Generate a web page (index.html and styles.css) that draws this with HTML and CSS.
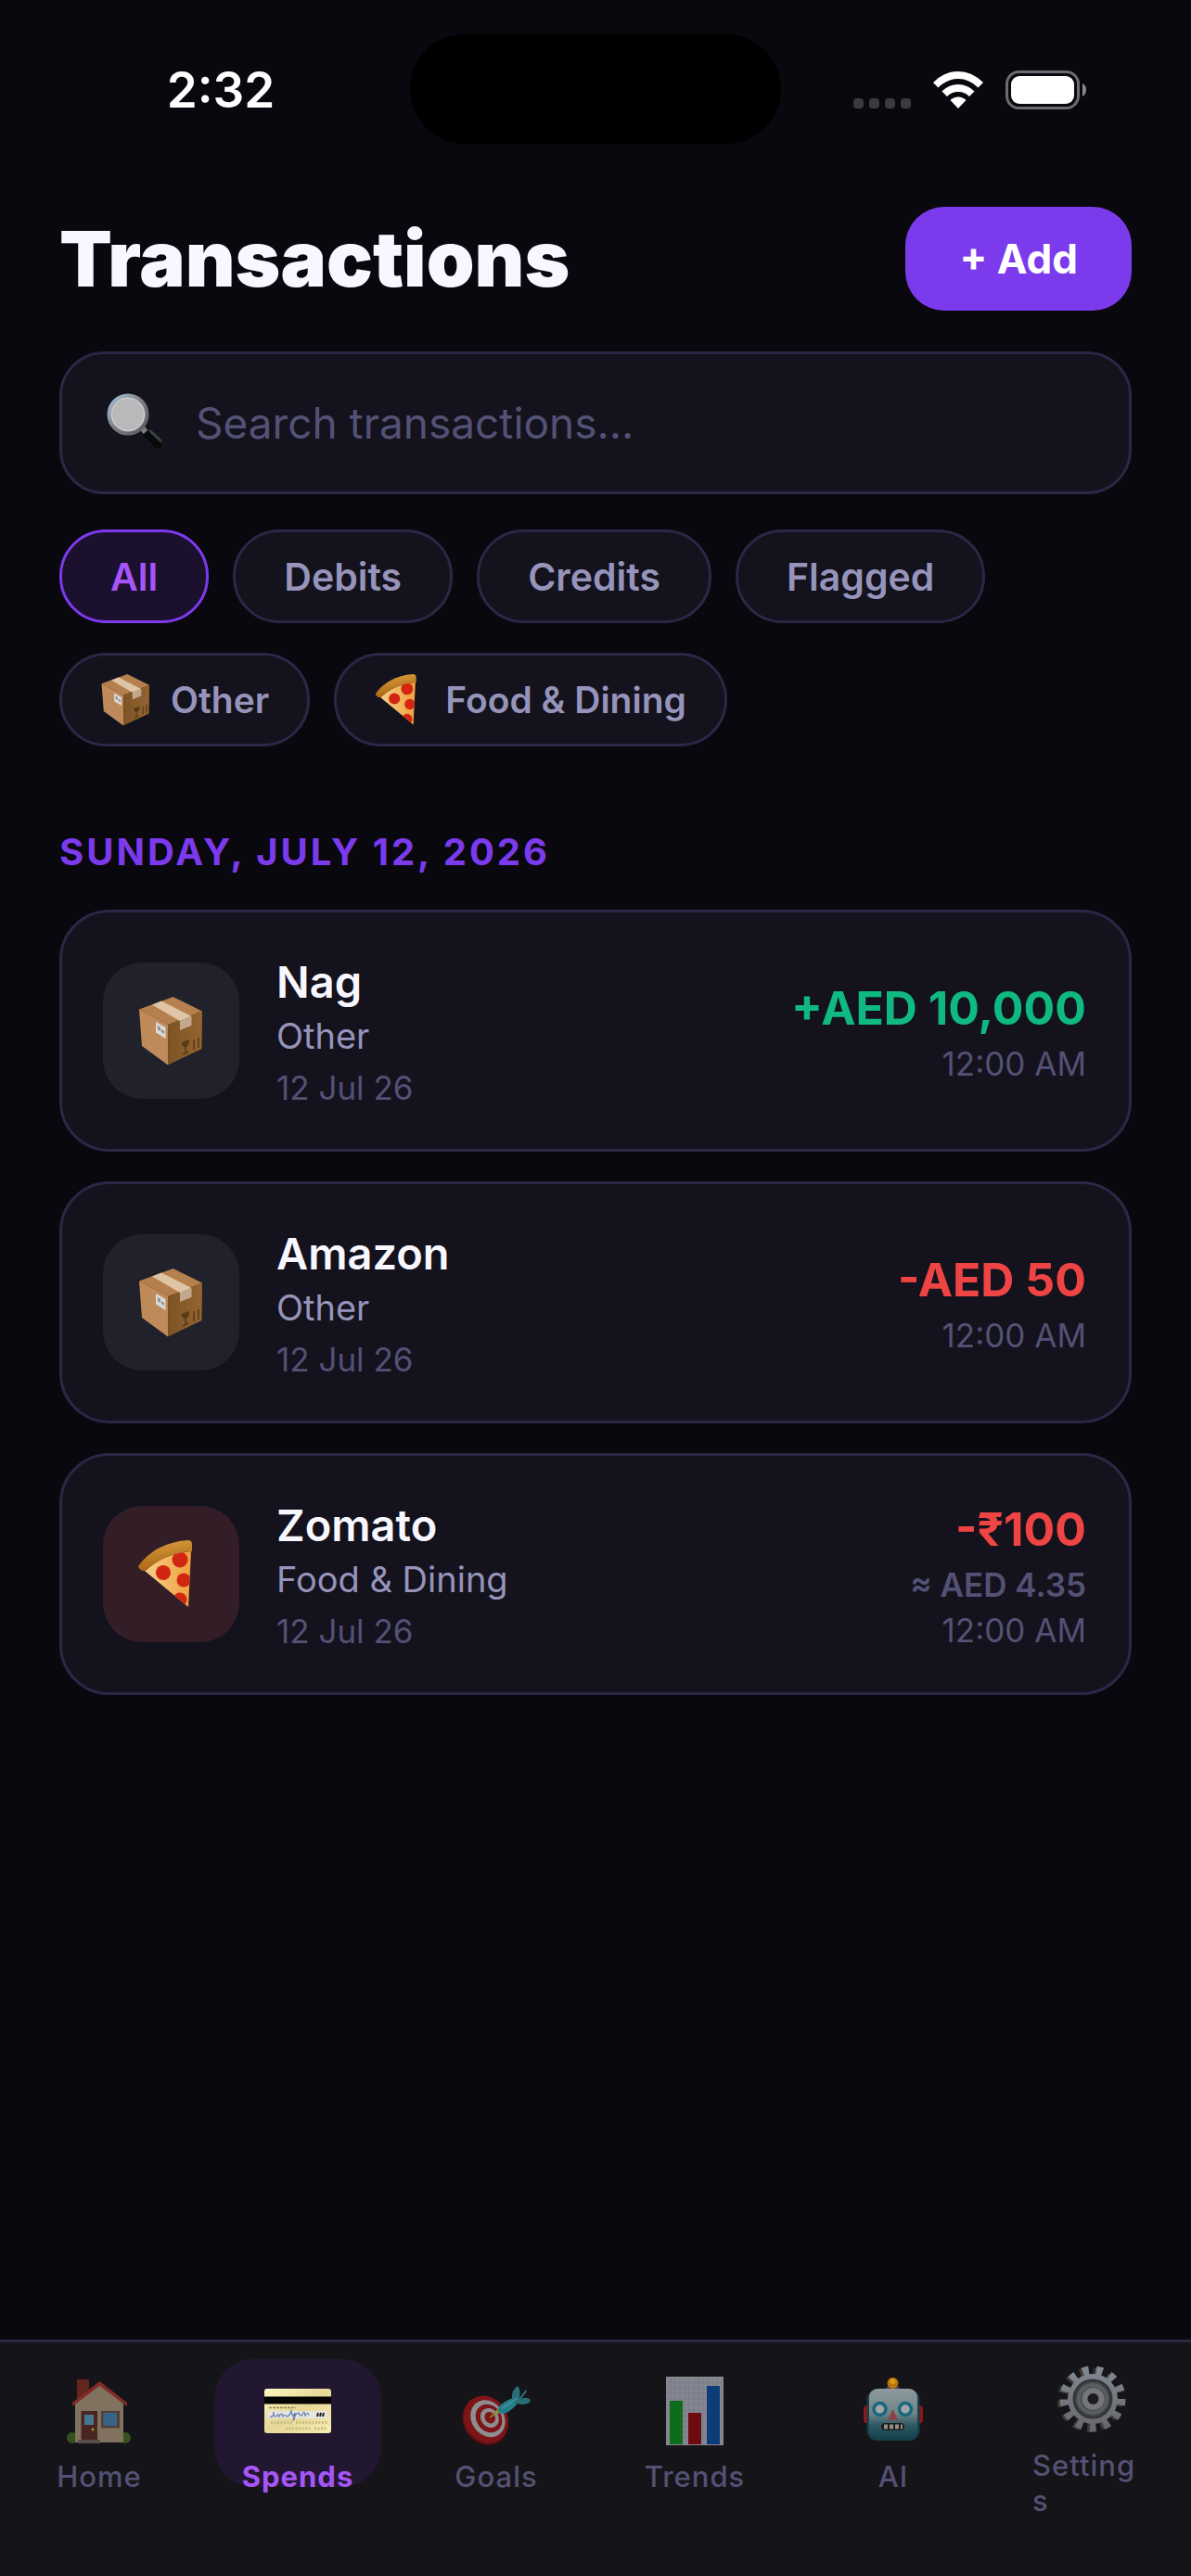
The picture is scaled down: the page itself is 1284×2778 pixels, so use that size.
FILE: index.html
```html
<!DOCTYPE html>
<html lang="en">
<head>
<meta charset="utf-8">
<meta name="viewport" content="width=device-width, initial-scale=1">
<title>Transactions</title>
<link rel="stylesheet" href="styles.css">
</head>
<body>
<svg class="sprite" aria-hidden="true">
  <defs>
    <linearGradient id="boxLeft" x1="0" y1="0" x2="0" y2="1"><stop offset="0" stop-color="#c08a58"/><stop offset="1" stop-color="#bd8a5c"/></linearGradient>
    <linearGradient id="boxRight" x1="0" y1="0" x2="1" y2="0"><stop offset="0" stop-color="#7d5425"/><stop offset="1" stop-color="#946430"/></linearGradient>
    <linearGradient id="crust" x1="0" y1="0" x2=".3" y2="1"><stop offset="0" stop-color="#e0a545"/><stop offset="1" stop-color="#a8620f"/></linearGradient>
    <linearGradient id="cheese" x1="0" y1="0" x2="1" y2="0"><stop offset="0" stop-color="#f5cf8c"/><stop offset="1" stop-color="#f0a03c"/></linearGradient>
    <linearGradient id="rim" x1="0" y1="0" x2="1" y2="1"><stop offset="0" stop-color="#a9c3da"/><stop offset=".5" stop-color="#7a7d82"/><stop offset="1" stop-color="#55585c"/></linearGradient>
    <linearGradient id="cardFace" x1="0" y1="0" x2="1" y2="1"><stop offset="0" stop-color="#fdf7c3"/><stop offset=".5" stop-color="#e5d795"/><stop offset="1" stop-color="#f8eeb4"/></linearGradient>
    <linearGradient id="robotFace" x1="0" y1="0" x2="0" y2="1"><stop offset="0" stop-color="#8d9a9c"/><stop offset=".5" stop-color="#6f8588"/><stop offset=".75" stop-color="#2b5863"/><stop offset="1" stop-color="#184450"/></linearGradient>
    <linearGradient id="gearFace" gradientUnits="userSpaceOnUse" x1="36" y1="0" x2="36" y2="72"><stop offset="0" stop-color="#818991"/><stop offset="1" stop-color="#66666c"/></linearGradient>
    <clipPath id="slice"><path d="M7 33Q28 14 57 12L54 72Z"/></clipPath>
  </defs>
  <symbol id="i-box" viewBox="-2 0 74 74">
    <path d="M36.600 0L68 15.500L31.500 30L0 13.500Z" fill="#b5804d"/>
    <path d="M0 13.500L31.500 30L31 73.500L3 53Z" fill="url(#boxLeft)"/>
    <path d="M31.500 30L68 15.500L67.500 56L31 73.500Z" fill="url(#boxRight)"/>
    <path d="M14 8.500L24 4.500L56.500 21L44 26Z" fill="#dfc5a5"/>
    <path d="M44 26L56.500 21V31L44 36Z" fill="#c3a98a"/>
    <path d="M18 27L28.500 33V45L18 38.500Z" fill="#d9d9d6"/>
    <path d="M20 31l3 2v4l-3-2zM24 35l3 2v3l-3-2z" fill="#8d8f8e"/>
    <path d="M46 49l8-3q0 7-4 8q-4 0-4-5z" fill="#56381a"/>
    <path d="M50 54v7M47 62l6-3M59 46v11M64 44v11" fill="none" stroke="#56381a" stroke-width="1.500"/>
  </symbol>
  <symbol id="i-pizza" viewBox="-1 0 74 74">
    <path d="M7 33Q28 14 57 12L54 72Z" fill="url(#cheese)"/>
    <g clip-path="url(#slice)" fill="#d22512"><circle cx="45" cy="21" r="8.500"/><circle cx="27" cy="35" r="8"/><circle cx="49" cy="43" r="7.500"/><circle cx="45" cy="64" r="7.500"/></g>
    <path d="M0 28Q18 3 53 0Q58 0 58 4V12Q30 13 8 33Q2 34 0 28Z" fill="url(#crust)"/>
  </symbol>
  <symbol id="i-search" viewBox="0 0 66 64">
    <path d="M43 43L57 56" stroke="#15181b" stroke-width="14" stroke-linecap="round"/>
    <path d="M42 43L55 56" stroke="#08090b" stroke-width="8" stroke-linecap="round"/>
    <path d="M47 41L58 51" stroke="#3b4145" stroke-width="3" stroke-linecap="round"/>
    <path d="M37 36L42 42" stroke="#7c7c7c" stroke-width="6"/>
    <circle cx="23" cy="23" r="20.500" fill="#b9b8ba" stroke="url(#rim)" stroke-width="4"/>
    <circle cx="23" cy="23" r="17.500" fill="none" stroke="#d6d6d6" stroke-width="1"/>
  </symbol>
  <symbol id="i-home" viewBox="-2 -3 74 74">
    <ellipse cx="6" cy="63" rx="6" ry="6" fill="#35511f"/><ellipse cx="63" cy="63" rx="6" ry="6" fill="#35511f"/>
    <path d="M11 0H24V16L11 22Z" fill="#64251f"/>
    <path d="M9 26L35.500 5L61 26V68H9Z" fill="#80725f"/>
    <path d="M6 25L35.500 2L65 25V29L35.500 7L6 29Z" fill="#812b27"/>
    <path d="M15.500 34H33V65H15.500Z" fill="#4a251f"/><path d="M19 38h10v11H19Z" fill="#477594"/>
    <circle cx="28" cy="54" r="1.500" fill="#a78e37"/>
    <path d="M37 34H57V52.500H37Z" fill="#543e34"/><path d="M39.500 36H54V50H39.500Z" fill="#38648a"/>
    <path d="M12 65H36V69H12Z" fill="#55504e"/>
  </symbol>
  <symbol id="i-card" viewBox="-1 -13 74 74">
    <rect width="72" height="48" rx="3" fill="url(#cardFace)"/>
    <path d="M0 8.500H72V16.500H0Z" fill="#050403"/>
    <path d="M5 20.500H34" stroke="#928958" stroke-width="1.500" stroke-dasharray="3 1"/>
    <rect x="4" y="24" width="64" height="8" fill="#e6e5e2"/>
    <path d="M6 30q4 2 4-5q-1 5 3 5q2-5 3 0q3-6 4 0q2-3 4 0q3 0 5-6q1 5 2 6l2-4q0 8-2 8q3-8 6-8q2 5 4 2q2-6 3 1q3-5 4 0" fill="none" stroke="#5878a8" stroke-width="1.200"/>
    <path d="M58 26l-1 4M61 26l-1 4M64 26l-1 4" stroke="#222" stroke-width="2"/>
    <path d="M7 36.500H30M34 36.500H68M23 43H50M54 43H68" stroke="#c9bd85" stroke-width="3" stroke-dasharray="2 1.500"/>
  </symbol>
  <symbol id="i-target" viewBox="0 -10 74 74">
    <g transform="rotate(-35 26 36)">
      <ellipse cx="24" cy="37" rx="23" ry="27" fill="#5d0f13"/>
      <ellipse cx="26" cy="36" rx="23" ry="26.500" fill="#7d1418"/>
      <ellipse cx="28" cy="36.500" rx="17.500" ry="21" fill="#8e8e90"/>
      <ellipse cx="29" cy="37" rx="13.500" ry="16" fill="#7d1418"/>
      <ellipse cx="30" cy="37" rx="9.500" ry="11" fill="#8e8e90"/>
      <ellipse cx="30.500" cy="37" rx="5.500" ry="6.500" fill="#7d1418"/>
    </g>
    <path d="M30 34L40 26" stroke="#8d751c" stroke-width="2"/>
    <path d="M34 30L41 22L44 30Z" fill="#a58a22"/>
    <path d="M39 28Q37 20 55 13Q58 14 59 20Q50 31 40 30Z" fill="#237e88"/>
    <path d="M54 15Q53 4 60 0Q64 5 62 13L69 4L70 6L64 14Q70 11 74 15Q73 22 58 19Z" fill="#2a6e77"/>
    <path d="M44 24L60 13" stroke="#3d929b" stroke-width="2"/>
  </symbol>
  <symbol id="i-chart" viewBox="-6 0 74 74">
    <path d="M0 0H62V74H0Z" fill="#85878f"/>
    <path d="M5 1V73M10 1V73M15 1V73M20 1V73M25 1V73M30 1V73M35 1V73M40 1V73M45 1V73M50 1V73M55 1V73M1 6H61M1 12H61M1 18H61M1 24H61M1 30H61M1 36H61M1 42H61M1 48H61M1 54H61M1 60H61M1 66H61" stroke="#787d8b" stroke-width="1"/>
    <path d="M4 26H18V73H4Z" fill="#0e6d1c"/><path d="M24 39H38V73H24Z" fill="#6c0c10"/><path d="M44 10H58V73H44Z" fill="#0d3d78"/>
  </symbol>
  <symbol id="i-robot" viewBox="-5 -1 74 74">
    <path d="M0 34Q0 30 4 30V49H2Q0 49 0 45ZM64 34Q64 30 60 30V49H62Q64 49 64 45Z" fill="#8e1719"/>
    <rect x="24" y="9" width="15" height="9" rx="4" fill="#4c3a5f"/>
    <circle cx="31.500" cy="6" r="6" fill="#b8740c"/><circle cx="31.500" cy="4" r="3" fill="#dc9c1a"/>
    <rect x="3.500" y="13" width="57" height="55" rx="11" fill="#17404a"/>
    <rect x="6" y="12" width="52" height="53" rx="9" fill="url(#robotFace)"/>
    <g fill="#a2a5a7" stroke="#17687c" stroke-width="3.500"><circle cx="17.500" cy="34" r="6.500"/><circle cx="45" cy="34" r="6.500"/></g>
    <path d="M31.500 34L37 46H26Z" fill="#8c4144"/>
    <rect x="19" y="49" width="25" height="8" rx="4" fill="#1e1d1d"/>
    <path d="M22 53H42" stroke="#918f85" stroke-width="5" stroke-dasharray="4 2"/>
  </symbol>
  <symbol id="i-gear" viewBox="-1 0 74 74">
    <circle cx="34" cy="37" r="30" fill="none" stroke="#3f3a38" stroke-width="10" stroke-dasharray="6.500 8"/>
    <circle cx="37" cy="36" r="30.500" fill="none" stroke="url(#gearFace)" stroke-width="10" stroke-dasharray="6.700 8.040"/>
    <circle cx="37" cy="36" r="27" fill="url(#gearFace)"/>
    <circle cx="37" cy="36" r="20" fill="#46494c" stroke="#34373a" stroke-width="3"/>
    <circle cx="37" cy="36" r="15" fill="none" stroke="#5b5d60" stroke-width="4"/>
    <circle cx="37.500" cy="36" r="9" fill="#1c1c1f" stroke="#74767a" stroke-width="6"/>
  </symbol>
</svg>

<div class="app">
  <header class="status">
    <time class="clock">2:32</time>
    <div class="island"></div>
    <div class="indicators">
      <svg class="cell" viewBox="0 0 62 12" fill="#3b3a3f" aria-hidden="true"><rect width="11" height="11" rx="4"/><rect x="17" width="11" height="11" rx="4"/><rect x="34" width="11" height="11" rx="4"/><rect x="51" width="11" height="11" rx="4"/></svg>
      <svg class="wifi" viewBox="0 0 54 40" fill="#fff" aria-hidden="true"><path d="M0 12Q12 0 27 0T54 12L48.500 17.500Q39 8 27 8T5.500 17.500Z"/><path d="M9.500 21.500Q17 14 27 14T44.500 21.500L39 27Q34 22 27 22T15 27Z"/><path d="M18.500 31Q22 27.500 27 27.500T35.500 31L27 40Z"/></svg>
      <svg class="battery" viewBox="0 0 88 42" aria-hidden="true"><rect x="1.500" y="1.500" width="77" height="39" rx="13" fill="none" stroke="#6c6b70" stroke-width="3"/><rect x="6" y="6" width="68" height="30" rx="9" fill="#fff"/><path d="M83 14Q87 16 87 21T83 28Z" fill="#8a898d"/></svg>
    </div>
  </header>

  <main class="page">
    <div class="heading">
      <h1>Transactions</h1>
      <button class="add" type="button">+ Add</button>
    </div>

    <label class="search">
      <svg class="search-icon" role="img" aria-label="Search"><use href="#i-search"/></svg>
      <input type="text" placeholder="Search transactions...">
    </label>

    <div class="filters">
      <button class="chip active" type="button">All</button>
      <button class="chip" type="button">Debits</button>
      <button class="chip" type="button">Credits</button>
      <button class="chip" type="button">Flagged</button>
    </div>
    <div class="filters">
      <button class="chip category" type="button"><svg class="chip-icon" aria-hidden="true"><use href="#i-box"/></svg>Other</button>
      <button class="chip category" type="button"><svg class="chip-icon" aria-hidden="true"><use href="#i-pizza"/></svg>Food &amp; Dining</button>
    </div>

    <section>
      <h2>SUNDAY, JULY 12, 2026</h2>
      <ul class="list">
        <li class="card">
          <div class="tile"><svg aria-hidden="true"><use href="#i-box"/></svg></div>
          <div class="info"><h3>Nag</h3><p class="kind">Other</p><p class="note">12 Jul 26</p></div>
          <div class="sum"><p class="amount credit">+AED 10,000</p><p class="note">12:00 AM</p></div>
        </li>
        <li class="card">
          <div class="tile"><svg aria-hidden="true"><use href="#i-box"/></svg></div>
          <div class="info"><h3>Amazon</h3><p class="kind">Other</p><p class="note">12 Jul 26</p></div>
          <div class="sum"><p class="amount debit">-AED 50</p><p class="note">12:00 AM</p></div>
        </li>
        <li class="card">
          <div class="tile food"><svg aria-hidden="true"><use href="#i-pizza"/></svg></div>
          <div class="info"><h3>Zomato</h3><p class="kind">Food &amp; Dining</p><p class="note">12 Jul 26</p></div>
          <div class="sum"><p class="amount debit">-₹100</p><p class="note converted">≈ AED 4.35</p><p class="note">12:00 AM</p></div>
        </li>
      </ul>
    </section>
  </main>

  <nav class="tabs">
    <a class="tab" href="#home"><svg aria-hidden="true"><use href="#i-home"/></svg><span>Home</span></a>
    <a class="tab current" href="#spends" aria-current="page"><svg aria-hidden="true"><use href="#i-card"/></svg><span>Spends</span></a>
    <a class="tab" href="#goals"><svg aria-hidden="true"><use href="#i-target"/></svg><span>Goals</span></a>
    <a class="tab" href="#trends"><svg aria-hidden="true"><use href="#i-chart"/></svg><span>Trends</span></a>
    <a class="tab" href="#ai"><svg aria-hidden="true"><use href="#i-robot"/></svg><span>AI</span></a>
    <a class="tab raised" href="#settings"><svg aria-hidden="true"><use href="#i-gear"/></svg><span>Settings</span></a>
  </nav>
</div>
</body>
</html>
```
FILE: styles.css
```css
:root {
  --bg: #09080e;
  --surface: #13121d;
  --line: #2a2845;
  --text: #f8f7ff;
  --soft: #9694ba;
  --muted: #535174;
  --violet: #7c3aed;
  --lilac: #a855f7;
}

* { box-sizing: border-box; }

body {
  margin: 0;
  background: var(--bg);
  color: var(--text);
  font-family: Inter, "Noto Sans", sans-serif;
}

h1, h2, h3, p, ul { margin: 0; padding: 0; }
button, input { font: inherit; }

/* Kept rendered at zero size so its gradients stay usable */
.sprite { position: absolute; width: 0; height: 0; }

.app {
  display: flex;
  flex-direction: column;
  min-height: 100vh;
}

/* Status bar */
.status {
  display: grid;
  grid-template-columns: 1fr 400px 1fr;
  align-items: center;
  padding-top: 37px;
}
.clock {
  justify-self: center;
  padding: 2px 0 0 34px;
  color: #fff;
  font-size: 53px;
  font-weight: 600;
  line-height: 64px;
}
.island {
  height: 118px;
  border-radius: 59px;
  background: #000;
}
.indicators {
  display: flex;
  align-items: center;
  justify-content: flex-end;
  gap: 24px;
  padding: 2px 112px 0 0;
}
.cell { width: 62px; height: 12px; margin-top: 30px; }
.wifi { width: 54px; height: 40px; }
.battery { width: 88px; height: 42px; }

/* Page */
.page {
  flex: 1;
  padding: 68px 64px 0;
}
.heading {
  display: flex;
  align-items: center;
  justify-content: space-between;
}
h1 {
  font-size: 83px;
  font-weight: 900;
  line-height: 100px;
}
.add {
  height: 112px;
  padding: 0 58px;
  border: 0;
  border-radius: 42px;
  background: var(--violet);
  color: #fff;
  font-size: 44px;
  font-weight: 700;
}
.search {
  display: flex;
  align-items: center;
  gap: 30px;
  height: 154px;
  margin: 44px 0 38px;
  padding: 0 48px;
  border: 3px solid var(--line);
  border-radius: 48px;
  background: var(--surface);
}
.search-icon { flex: none; width: 66px; height: 64px; }
.search input {
  flex: 1;
  min-width: 0;
  padding: 0;
  border: 0;
  outline: 0;
  background: none;
  color: var(--text);
  font-size: 46px;
}
.search input::placeholder { color: var(--muted); opacity: 1; }

.filters {
  display: flex;
  flex-wrap: wrap;
  gap: 26px;
  margin-bottom: 32px;
}
.chip {
  display: flex;
  align-items: center;
  gap: 20px;
  height: 101px;
  padding: 0 52px;
  border: 3px solid var(--line);
  border-radius: 50px;
  background: var(--surface);
  color: var(--soft);
  font-size: 41px;
  font-weight: 600;
}
.chip.active {
  border-color: var(--violet);
  background: #1c102f;
  color: var(--lilac);
}
.chip.category { padding: 0 41px; font-size: 39px; }
.chip-icon { width: 56px; height: 56px; }

h2 {
  margin: 90px 0 38px;
  color: var(--violet);
  font-size: 40px;
  font-weight: 700;
  line-height: 48px;
  letter-spacing: 3px;
}

.list {
  display: flex;
  flex-direction: column;
  gap: 32px;
  list-style: none;
}
.card {
  display: flex;
  align-items: center;
  gap: 40px;
  min-height: 261px;
  padding: 0 46px 0 44px;
  border: 3px solid var(--line);
  border-radius: 54px;
  background: var(--surface);
}
.tile {
  display: grid;
  place-items: center;
  width: 147px;
  height: 147px;
  border-radius: 42px;
  background: #20212b;
}
.tile.food { background: #331e28; }
.tile svg { width: 74px; height: 74px; }
.info { flex: 1; }
h3 { font-size: 47px; font-weight: 600; line-height: 60px; }
.kind {
  margin: 4px 0 10px;
  color: var(--soft);
  font-size: 38px;
  line-height: 48px;
}
.note { color: var(--muted); font-size: 35px; line-height: 44px; }
.sum { text-align: right; }
.sum .note { margin-top: 5px; }
.amount { font-size: 50px; font-weight: 700; line-height: 66px; }
.credit { color: #10b981; }
.debit { color: #ef4444; }
.converted { font-weight: 600; }

/* Tab bar */
.tabs {
  display: grid;
  grid-template-columns: repeat(6, 1fr);
  justify-items: center;
  align-items: start;
  min-height: 255px;
  padding-top: 18px;
  border-top: 3px solid var(--line);
  background: #151418;
}
.tab {
  display: flex;
  flex-direction: column;
  align-items: center;
  gap: 12px;
  width: 180px;
  height: 138px;
  padding: 16px 26px 0;
  border-radius: 42px;
  color: var(--muted);
  font-size: 31px;
  font-weight: 500;
  line-height: 38px;
  letter-spacing: 1px;
  text-decoration: none;
}
.tab svg { flex: none; width: 74px; height: 74px; margin: 3px 0; }
.tab span { max-width: 100%; overflow-wrap: anywhere; }
.tab.current {
  background: #211731;
  color: var(--lilac);
  font-weight: 700;
}
.tab.raised { padding-top: 4px; }
```
